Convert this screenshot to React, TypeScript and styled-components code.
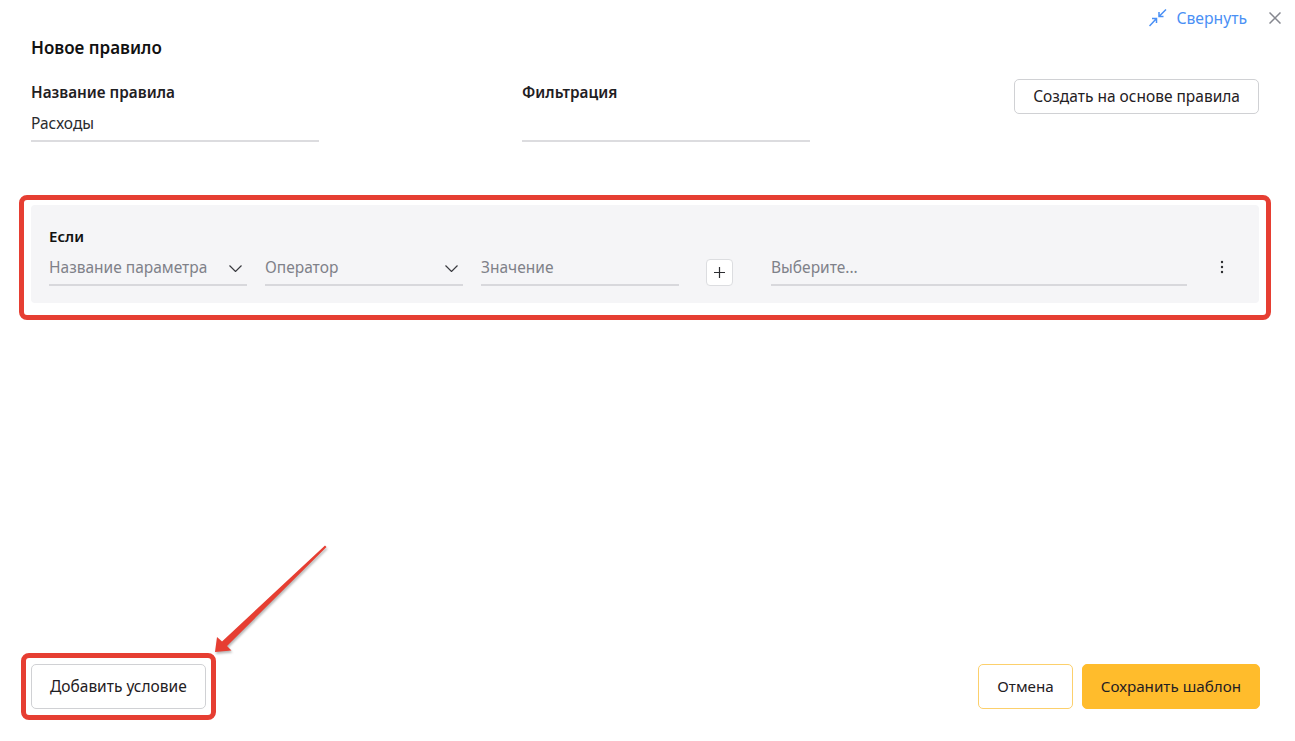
import styled, { createGlobalStyle } from "styled-components";

const GlobalStyle = createGlobalStyle`
  html, body {
    margin: 0;
    padding: 0;
    background: #fff;
  }
  body {
    font-family: "Noto Sans", "Liberation Sans", sans-serif;
    font-size: 15.5px;
    color: #1f2023;
  }
`;

const Page = styled.div`
  position: relative;
  width: 1295px;
  height: 741px;
  overflow: hidden;
  box-sizing: border-box;
  display: flex;
  flex-direction: column;
  padding: 9px 14px 21px 19px;
`;

const TopBar = styled.div`
  display: flex;
  justify-content: flex-end;
  align-items: center;
  height: 18px;
`;

const CollapseLink = styled.a`
  display: flex;
  align-items: center;
  gap: 9px;
  color: #4a90f5;
  font-size: 15.7px;
  line-height: 18px;
`;

const CloseButton = styled.span`
  display: flex;
  margin-left: 22px;
`;

const Form = styled.div`
  padding: 0 22px 0 12px;
`;

const Title = styled.h1`
  margin: 8px 0 0;
  font-size: 17px;
  line-height: 26px;
  font-weight: 600;
  color: #111;
`;

const FieldsRow = styled.div`
  display: flex;
  align-items: flex-start;
  margin-top: 13px;
`;

const Field = styled.div`
  width: 288px;
  margin-right: 203px;
`;

const Label = styled.div`
  font-size: 15.3px;
  font-weight: 600;
  line-height: 22px;
  margin-top: 7px;
`;

const Value = styled.div`
  height: 32px;
  line-height: 30px;
  margin-top: 5px;
  border-bottom: 2px solid #dcdcdf;
  box-sizing: content-box;
  color: #2a2b2e;
`;

const Button = styled.button<{ $primary?: boolean; $outlined?: boolean }>`
  box-sizing: border-box;
  height: 45px;
  padding: 0 18px 2px;
  border-radius: 5px;
  border: 1px solid ${(p) => (p.$primary ? "#ffbc2c" : p.$outlined ? "#fcd06c" : "#d0d1d4")};
  background: ${(p) => (p.$primary ? "#ffbc2c" : "#fff")};
  font: inherit;
  color: #1f2023;
`;

const TemplateButton = styled(Button)`
  height: 35px;
  margin: 5px 0 0 auto;
  white-space: nowrap;
`;

const Highlight = styled.div`
  border: 5px solid #e63e32;
  border-radius: 8px;
  box-sizing: border-box;
`;

const ConditionFrame = styled(Highlight)`
  width: 1252px;
  height: 125px;
  margin-top: 53px;
  padding: 5px 7px 12px;
`;

const ConditionPanel = styled.div`
  height: 98px;
  background: #f5f5f7;
  border-radius: 4px;
  padding: 19px 18px 0;
  box-sizing: border-box;
`;

const ConditionTitle = styled.div`
  font-size: 15px;
  font-weight: 600;
  line-height: 24px;
  color: #111;
`;

const ConditionRow = styled.div`
  display: flex;
  align-items: flex-end;
  margin-top: 5px;
`;

const Select = styled.div<{ $width: number; $gap?: number }>`
  width: ${(p) => p.$width}px;
  margin-right: ${(p) => p.$gap ?? 18}px;
  box-sizing: border-box;
  height: 33px;
  display: flex;
  align-items: center;
  justify-content: space-between;
  padding: 0 5px 3px 0;
  border-bottom: 2px solid #d8d8dc;
  color: #7f8189;
  white-space: nowrap;
`;

const ChevronIcon = styled.svg`
  margin-top: 2px;
`;

const AddButton = styled.span`
  width: 27px;
  height: 27px;
  box-sizing: border-box;
  margin-right: 38px;
  background: #fff;
  border: 1px solid #dcdde0;
  border-radius: 4px;
  display: flex;
  align-items: center;
  justify-content: center;
`;

const MoreButton = styled.span`
  display: flex;
  align-self: flex-start;
  margin: 7px 0 0 33px;
`;

const Footer = styled.div`
  margin-top: auto;
  display: flex;
  align-items: flex-end;
  justify-content: space-between;
  padding-right: 21px;
`;

const FooterFrame = styled(Highlight)`
  margin-left: 2px;
  padding: 6px 5px;
  display: flex;
`;

const FooterActions = styled.div`
  display: flex;
  gap: 9px;
  margin-bottom: 11px;
  font-size: 15.2px;
`;

const ArrowLayer = styled.svg`
  position: absolute;
  left: 205px;
  top: 535px;
  filter: drop-shadow(1px 2px 1px rgba(0, 0, 0, 0.28));
`;

const Chevron = () => (
  <ChevronIcon width="13" height="7" viewBox="0 0 13 7" fill="none">
    <path d="M.5.5l6 6 6-6" stroke="#3a3b40" strokeWidth="1.2" />
  </ChevronIcon>
);

export default function App() {
  return (
    <>
      <GlobalStyle />
      <Page>
        <TopBar>
          <CollapseLink>
            <svg width="18" height="18" viewBox="0 0 18 18" fill="none" stroke="#4a90f5" strokeWidth="1.5">
              <path d="M.5 17l7-7.5M3 9.5h4.5V14M17 .5l-7 7M10 3v4.5h4.5" />
            </svg>
            Свернуть
          </CollapseLink>
          <CloseButton>
            <svg width="12" height="12" viewBox="0 0 12 12" fill="none" stroke="#85878f" strokeWidth="1.5">
              <path d="M.5.5l11 11M11.5.5l-11 11" />
            </svg>
          </CloseButton>
        </TopBar>
        <Form>
          <Title>Новое правило</Title>
          <FieldsRow>
            <Field>
              <Label>Название правила</Label>
              <Value>Расходы</Value>
            </Field>
            <Field>
              <Label>Фильтрация</Label>
              <Value />
            </Field>
            <TemplateButton>Создать на основе правила</TemplateButton>
          </FieldsRow>
        </Form>
        <ConditionFrame>
          <ConditionPanel>
            <ConditionTitle>Если</ConditionTitle>
            <ConditionRow>
              <Select $width={198}>
                Название параметра
                <Chevron />
              </Select>
              <Select $width={198}>
                Оператор
                <Chevron />
              </Select>
              <Select $width={198} $gap={27}>Значение</Select>
              <AddButton>
                <svg width="11" height="11" viewBox="0 0 11 11" fill="none" stroke="#2c2d30" strokeWidth="1.2">
                  <path d="M5.5 0v11M0 5.5h11" />
                </svg>
              </AddButton>
              <Select $width={416} $gap={0}>Выберите...</Select>
              <MoreButton>
                <svg width="4" height="14" viewBox="0 0 4 14" fill="#2c2d30">
                  <circle cx="2" cy="2" r="1.2" />
                  <circle cx="2" cy="7" r="1.2" />
                  <circle cx="2" cy="12" r="1.2" />
                </svg>
              </MoreButton>
            </ConditionRow>
          </ConditionPanel>
        </ConditionFrame>
        <Footer>
          <FooterFrame>
            <Button>Добавить условие</Button>
          </FooterFrame>
          <FooterActions>
            <Button $outlined>Отмена</Button>
            <Button $primary>Сохранить шаблон</Button>
          </FooterActions>
        </Footer>
        <ArrowLayer width="130" height="125" viewBox="205 535 130 125">
          <polygon
            points="215,652 217,637 222,641.5 325,545.5 326.5,547 227,646 231.5,650.5"
            fill="#e63e32"
          />
        </ArrowLayer>
      </Page>
    </>
  );
}
